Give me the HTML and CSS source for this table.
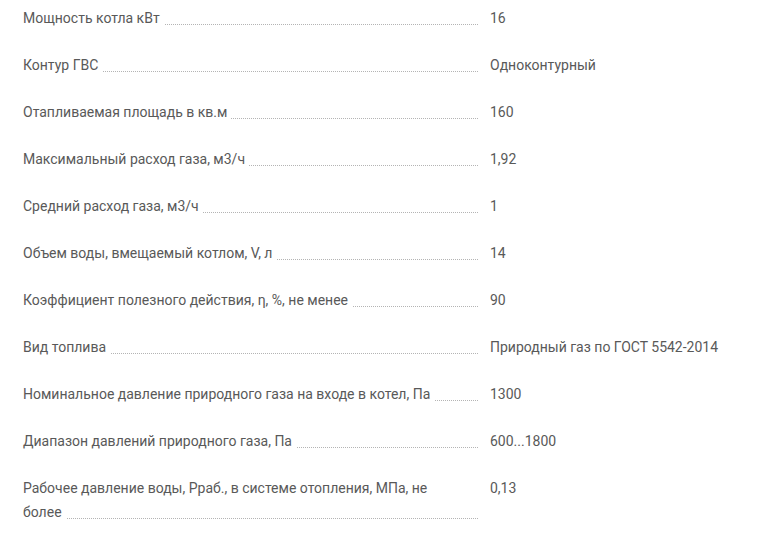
FILE: index.html
```html
<!DOCTYPE html>
<html lang="ru">
<head>
<meta charset="utf-8">
<title>Характеристики</title>
<link rel="stylesheet" href="styles.css">
</head>
<body>
<div class="specs">
  <div class="row"><div class="label"><span>Мощность котла кВт</span></div><div class="value">16</div></div>
  <div class="row"><div class="label"><span>Контур ГВС</span></div><div class="value">Одноконтурный</div></div>
  <div class="row"><div class="label"><span>Отапливаемая площадь в кв.м</span></div><div class="value">160</div></div>
  <div class="row"><div class="label"><span>Максимальный расход газа, м3/ч</span></div><div class="value">1,92</div></div>
  <div class="row"><div class="label"><span>Средний расход газа, м3/ч</span></div><div class="value">1</div></div>
  <div class="row"><div class="label"><span>Объем воды, вмещаемый котлом, V, л</span></div><div class="value">14</div></div>
  <div class="row"><div class="label"><span>Коэффициент полезного действия, η, %, не менее</span></div><div class="value">90</div></div>
  <div class="row"><div class="label"><span>Вид топлива</span></div><div class="value">Природный газ по ГОСТ 5542-2014</div></div>
  <div class="row"><div class="label"><span>Номинальное давление природного газа на входе в котел, Па</span></div><div class="value">1300</div></div>
  <div class="row"><div class="label"><span>Диапазон давлений природного газа, Па</span></div><div class="value">600...1800</div></div>
  <div class="row"><div class="label"><span>Рабочее давление воды, Рраб., в системе отопления, МПа, не более</span></div><div class="value">0,13</div></div>
</div>
</body>
</html>
```
FILE: styles.css
```css
html, body {
  margin: 0;
  padding: 0;
  background: #fff;
}
body {
  font-family: Roboto, "Noto Sans", Arial, sans-serif;
  font-size: 14px;
  line-height: 24px;
  color: #595959;
}
.specs {
  display: flex;
  flex-direction: column;
  gap: 23px;
  padding: 6px 0 0 23px;
}
.row {
  display: flex;
  gap: 11px;
}
.label {
  width: 456px;
  box-sizing: border-box;
  padding-right: 14px;
  flex-shrink: 0;
  background-image: linear-gradient(to right, #b4b4b4 1px, transparent 1px);
  background-size: 2px 1px;
  background-repeat: repeat-x;
  background-position: left 0 bottom 5px;
}
.label span {
  background: #fff;
  padding-right: 4px;
}
.value {
  flex: 1;
}
```
